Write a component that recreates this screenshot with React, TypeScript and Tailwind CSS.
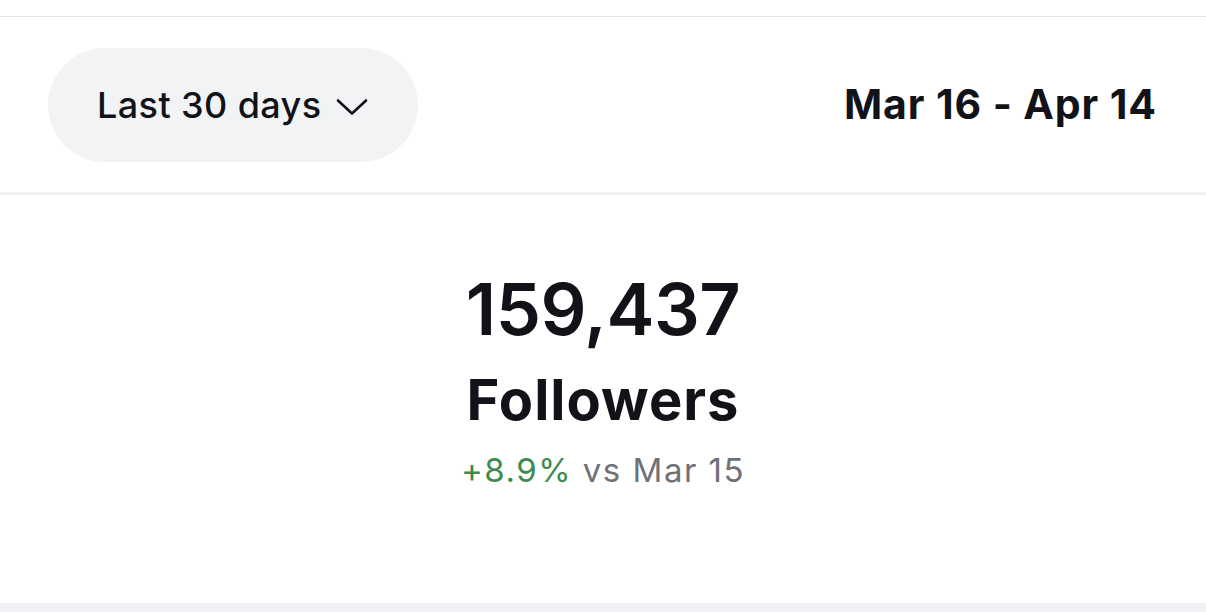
export default function App() {
  return (
    <div className="w-[1206px] h-[612px] bg-white flex flex-col text-[#111318] font-['Inter',sans-serif] overflow-hidden">
      <div className="h-[16px] shrink-0" />
      <div className="h-px bg-[#e4e4e6] shrink-0" />
      {/* Range selector */}
      <div className="h-[175px] shrink-0 flex items-center justify-between pl-[48px] pr-[49px]">
        <button className="h-[114px] w-[370px] rounded-full bg-[#f2f3f5] flex items-center pl-[49px] gap-[15px]">
          <span className="text-[36px] font-medium tracking-[0.4px] leading-none">Last 30 days</span>
          <svg width="32" height="18" viewBox="0 0 32 18" fill="none" className="mt-[4px]">
            <path d="M2 2.5 L16 15.5 L30 2.5" stroke="#111318" strokeWidth="2.6" strokeLinecap="round" strokeLinejoin="round" />
          </svg>
        </button>
        <div className="text-[41px] font-bold tracking-[0.9px] leading-none">Mar 16 - Apr 14</div>
      </div>
      <div className="h-[3px] bg-[#f0f0f3] shrink-0" />
      {/* Stat */}
      <div className="flex-1 flex flex-col items-center pt-[78px]">
        <div className="text-[72px] font-semibold leading-[72px] tracking-[-0.5px]">159,437</div>
        <div className="text-[56px] font-bold leading-[56px] tracking-[1px] mt-[27px]">Followers</div>
        <div className="text-[33px] leading-[33px] tracking-[1.5px] mt-[26px]">
          <span className="text-[#3e8b4f]">+8.9%</span>
          <span className="text-[#6e7178]"> vs Mar 15</span>
        </div>
      </div>
      <div className="h-[9px] bg-[#f0f1f5] shrink-0" />
    </div>
  );
}
